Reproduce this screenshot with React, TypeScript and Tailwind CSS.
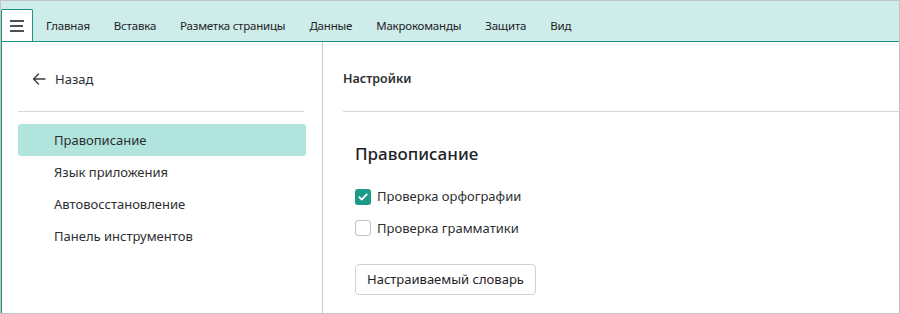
import React from "react";

const menu = ["Главная", "Вставка", "Разметка страницы", "Данные", "Макрокоманды", "Защита", "Вид"];
const sections = ["Правописание", "Язык приложения", "Автовосстановление", "Панель инструментов"];

const Check = ({ checked }: { checked: boolean }) =>
  checked ? (
    <span className="flex h-[16px] w-[16px] items-center justify-center rounded-[3px] bg-[#1b9a88]">
      <svg width="12" height="12" viewBox="0 0 12 12" fill="none">
        <path d="M2.3 6.2l2.4 2.4 5-5.2" stroke="white" strokeWidth="1.9" strokeLinecap="round" strokeLinejoin="round" />
      </svg>
    </span>
  ) : (
    <span className="h-[16px] w-[16px] rounded-[3px] border border-[#c2c2c2] bg-white" />
  );

const App = () => {
  return (
    <div
      className="flex h-[314px] w-[900px] flex-col border border-[#c4c4c4] bg-white text-[#2b2f33]"
      style={{ fontFamily: '"Noto Sans", "Open Sans", sans-serif' }}
    >
      <div className="flex h-[41px] items-end border-b border-[#1b9484] bg-[#cdecea]">
        <div className="flex h-[32px] w-[32px] flex-col items-center justify-center gap-[3px] rounded-t-[2px] border border-b-0 border-[#1b9484] bg-white">
          <span className="h-[2px] w-[14px] bg-[#4a5157]" />
          <span className="ml-[-1px] h-[2px] w-[13px] bg-[#4a5157]" />
          <span className="h-[2px] w-[14px] bg-[#4a5157]" />
        </div>
        <div className="flex h-[32px] items-center pl-[1px] pt-[1px] text-[11.5px] tracking-[-0.2px] text-[#1f2326]">
          {menu.map((m) => (
            <span key={m} className="px-[12px]">
              {m}
            </span>
          ))}
        </div>
      </div>

      <div className="flex flex-1 border-l border-[#1b9484]">
        <div className="w-[321px] border-r border-[#c8c8c8]">
          <div className="flex h-[69px] items-start gap-[9px] pl-[30px] pt-[28px] text-[13px]">
            <svg width="14" height="18" viewBox="0 0 14 18" fill="none">
              <path d="M13 9H1.5M6.5 4L1.5 9l5 5" stroke="#3a3f44" strokeWidth="1.4" strokeLinecap="round" strokeLinejoin="round" />
            </svg>
            <span>Назад</span>
          </div>
          <div className="ml-[16px] h-px w-[286px] bg-[#d8d8d8]" />
          <div className="mt-[12px] flex flex-col">
            {sections.map((s, i) => (
              <div
                key={s}
                className={
                  i === 0
                    ? "ml-[16px] flex h-[32px] w-[288px] items-center rounded-[3px] bg-[#b1e4dc] pl-[36px] pt-[2px] text-[13px]"
                    : "ml-[16px] flex h-[32px] w-[288px] items-center pl-[36px] pt-[2px] text-[13px]"
                }
              >
                {s}
              </div>
            ))}
          </div>
        </div>

        <div className="flex-1">
          <div className="flex h-[69px] items-start pl-[20px] pt-[28px] text-[12.5px] font-semibold text-[#2b2f33]">
            Настройки
          </div>
          <div className="ml-[20px] h-px bg-[#d8d8d8]" />
          <div className="pl-[32px] pt-[30px]">
            <div className="text-[17px] font-medium leading-[24px] text-[#1f2326]">Правописание</div>
            <div className="mt-[21px] flex items-center gap-[6px] text-[13px]">
              <Check checked />
              <span>Проверка орфографии</span>
            </div>
            <div className="mt-[12px] flex items-center gap-[6px] text-[13px]">
              <Check checked={false} />
              <span>Проверка грамматики</span>
            </div>
            <button className="mt-[26px] h-[31px] rounded-[4px] border border-[#d2d2d2] bg-white px-[11px] pt-[1px] text-[13px] text-[#1f2326]">
              Настраиваемый словарь
            </button>
          </div>
        </div>
      </div>
    </div>
  );
};

export default App;
